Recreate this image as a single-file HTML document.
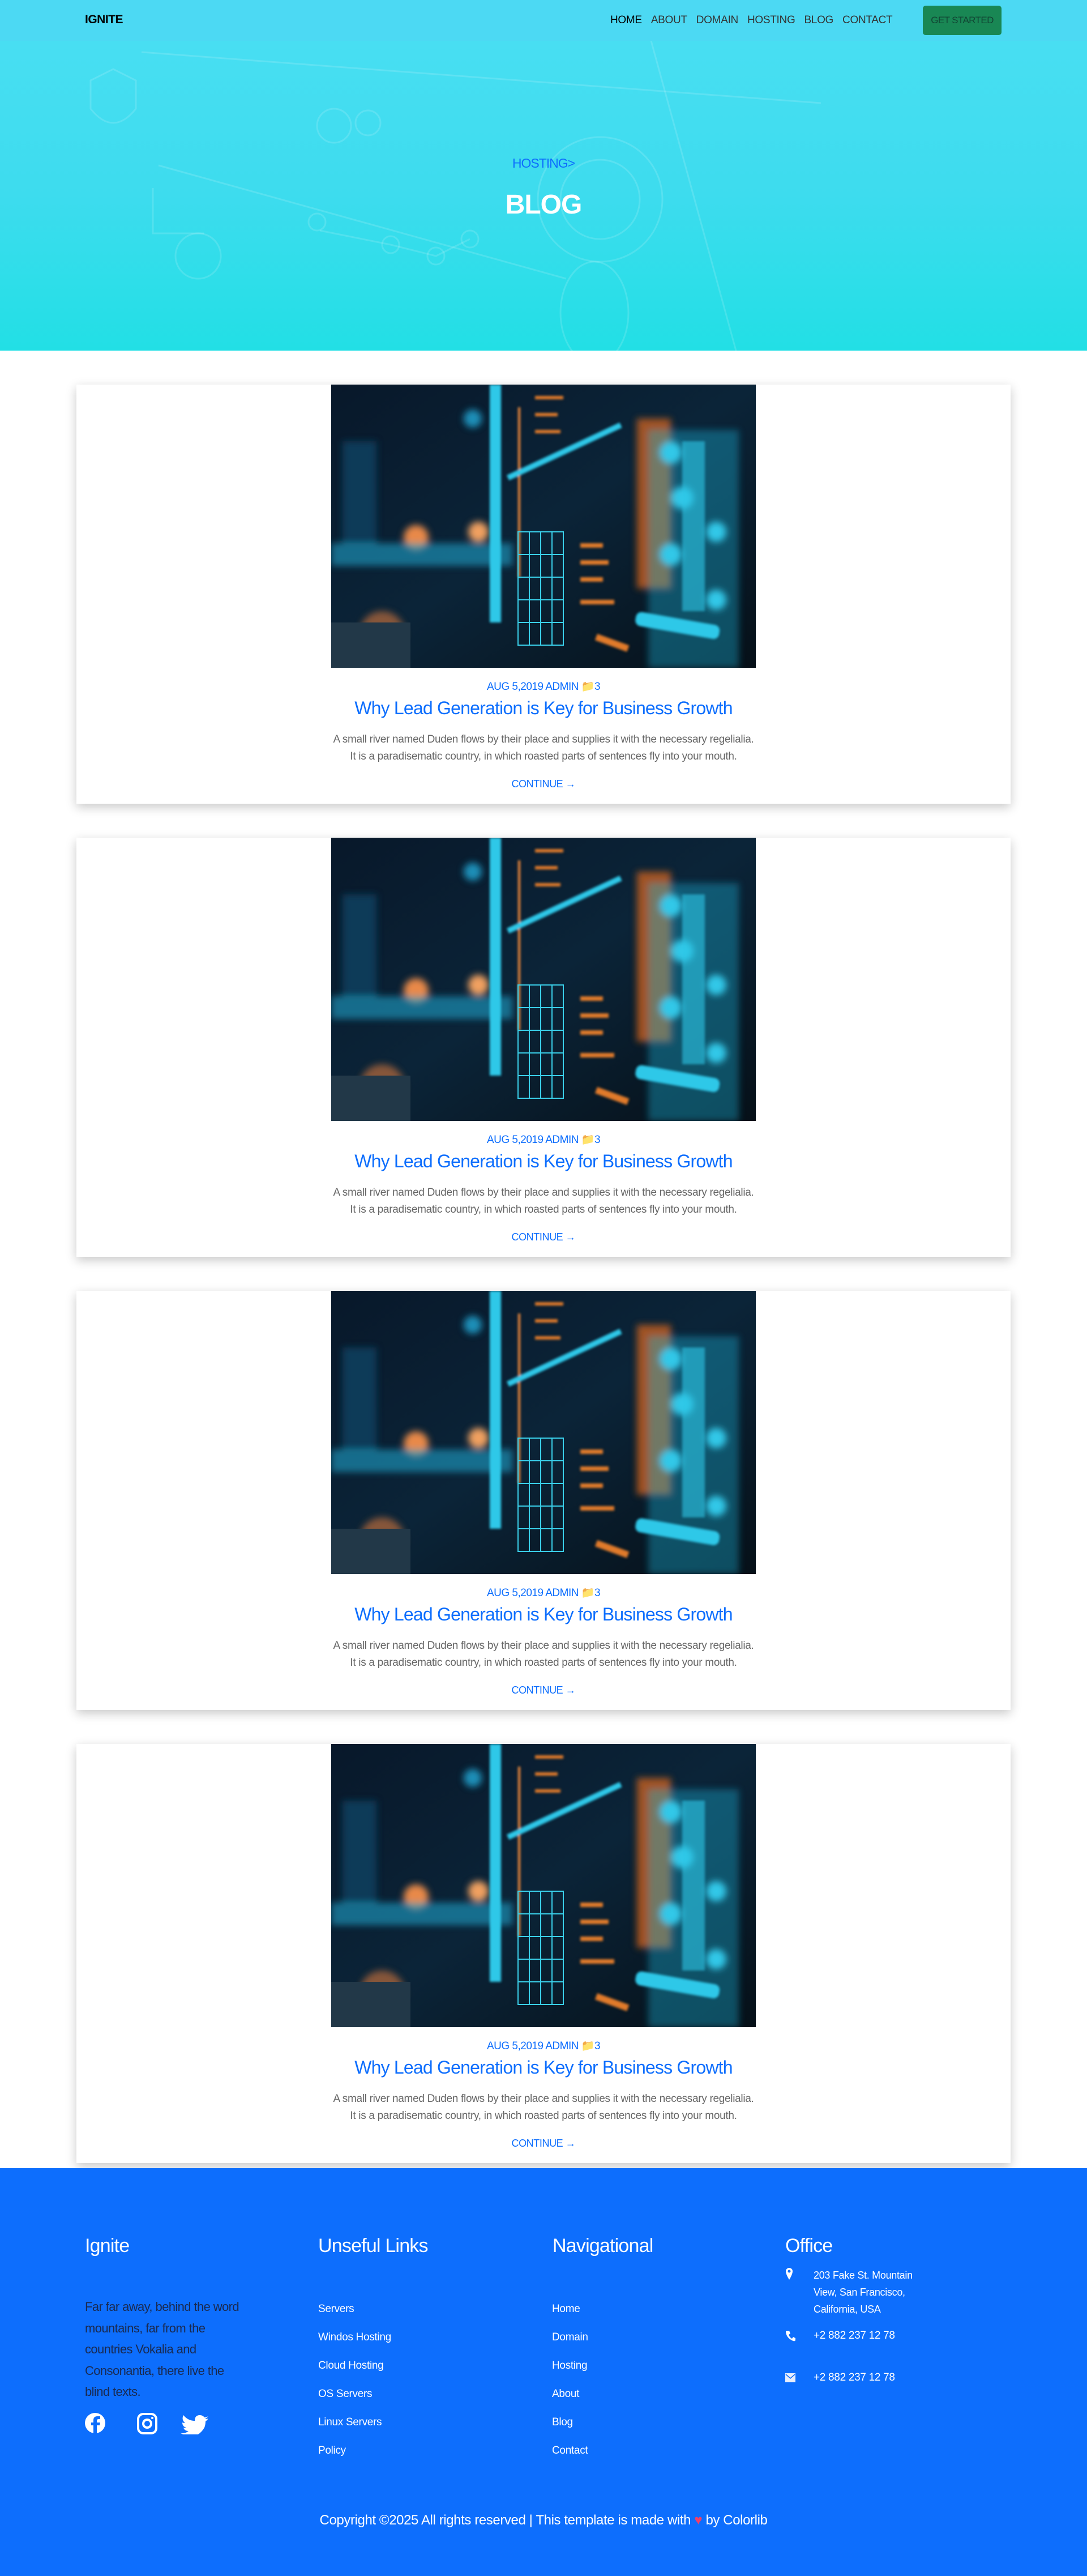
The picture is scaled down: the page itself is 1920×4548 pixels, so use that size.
<!DOCTYPE html>
<html><head><meta charset="utf-8">
<style>
*{margin:0;padding:0;box-sizing:border-box}
body{width:1920px;height:4548px;background:#fff;font-family:"Liberation Sans",sans-serif;position:relative;overflow:hidden}
.nav{position:absolute;left:0;top:0;width:1920px;height:72px;background:#4cd9f3;z-index:2}
.logo{position:absolute;left:150px;top:23px;font-size:21px;font-weight:bold;color:#000;letter-spacing:-0.5px}
.links{position:absolute;left:1078px;top:25px;font-size:19px;color:#333;letter-spacing:-0.3px;white-space:nowrap}
.links span{margin-right:16px}
.btn{position:absolute;left:1630px;top:10px;width:139px;height:52px;background:#198754;border-radius:5px;color:#143;font-size:17px;line-height:52px;text-align:center;letter-spacing:-0.6px}
.hero{position:absolute;left:0;top:72px;width:1920px;height:547px;background:linear-gradient(180deg,#48def2 0%,#3ddcee 50%,#22dfe5 100%);overflow:hidden}
.hero svg{position:absolute;left:0;top:0}
.crumb{position:absolute;top:203px;width:100%;text-align:center;font-size:23px;color:#0d6efd;font-weight:300;letter-spacing:-1px}
.h1{position:absolute;top:262px;width:100%;text-align:center;font-size:48px;font-weight:bold;color:#fff;letter-spacing:-1px}
.card{position:absolute;left:135px;width:1650px;height:740px;background:#fff;box-shadow:0 6px 18px rgba(0,0,0,.22)}
.img{position:absolute;left:450px;top:0;width:750px;height:500px;overflow:hidden;background:#07121f}
.meta{position:absolute;top:521px;width:100%;text-align:center;font-size:19px;color:#0d6efd;letter-spacing:-0.5px}
.title{position:absolute;top:553px;width:100%;text-align:center;font-size:32px;color:#0d6efd;letter-spacing:-0.8px}
.desc{position:absolute;top:612px;width:100%;text-align:center;font-size:19px;color:#666;line-height:30px;letter-spacing:-0.3px}
.cont{position:absolute;top:695px;width:100%;text-align:center;font-size:18px;color:#0d6efd;letter-spacing:-0.4px}
.foot{position:absolute;left:0;top:3828px;width:1920px;height:720px;background:#0d6efd;color:#fff}
.fh{position:absolute;top:118px;font-size:34px;letter-spacing:-0.8px}
.fl{position:absolute;font-size:19px;letter-spacing:-0.3px}
.fp{position:absolute;left:150px;top:226px;width:310px;font-size:22px;line-height:37.5px;color:#1a2a50;font-weight:300;letter-spacing:-0.6px}
.copy{position:absolute;top:608px;width:100%;text-align:center;font-size:24px;letter-spacing:-0.4px}
</style></head><body>
<div class="nav">
<div class="logo">IGNITE</div>
<div class="links"><span style="color:#000">HOME</span><span>ABOUT</span><span>DOMAIN</span><span>HOSTING</span><span>BLOG</span><span>CONTACT</span></div>
<div class="btn">GET STARTED</div>
</div>
<div class="hero">
<svg width="1920" height="547" fill="none" stroke="rgba(255,255,255,0.14)" stroke-width="3">
<line x1="250" y1="20" x2="1450" y2="110"/>
<line x1="1150" y1="0" x2="1300" y2="547"/>
<line x1="280" y1="220" x2="1000" y2="420"/>
<path d="M160 70 l40 -20 l40 20 v50 q-40 50 -80 0z"/>
<circle cx="590" cy="150" r="30"/><circle cx="650" cy="145" r="22"/>
<circle cx="560" cy="320" r="15"/><circle cx="690" cy="360" r="15"/><circle cx="770" cy="380" r="15"/><circle cx="830" cy="350" r="15"/>
<path d="M565 335 L690 360 L770 380 L830 350"/>
<circle cx="1060" cy="280" r="110"/><circle cx="1060" cy="280" r="70"/>
<circle cx="350" cy="380" r="40"/>
<path d="M270 260 v80 h90"/>
<ellipse cx="1050" cy="480" rx="60" ry="90"/>
</svg>
<div class="crumb">HOSTING&gt;</div>
<div class="h1">BLOG</div>
</div>

<svg width="0" height="0" style="position:absolute"><defs><filter id="b" x="-20%" y="-20%" width="140%" height="140%"><feGaussianBlur stdDeviation="6"/></filter><filter id="b2"><feGaussianBlur stdDeviation="2"/></filter><linearGradient id="g" x1="0" y1="0" x2="1" y2="1"><stop offset="0" stop-color="#08182a"/><stop offset=".5" stop-color="#0b2438"/><stop offset="1" stop-color="#061018"/></linearGradient>
<g id="art"><rect width="750" height="500" fill="url(#g)"/>
<g filter="url(#b)"><circle cx="50" cy="240" r="20" fill="#f39a4a"/><circle cx="150" cy="270" r="22" fill="#e8894a"/><circle cx="260" cy="260" r="18" fill="#f0a060"/><rect x="0" y="280" width="320" height="40" fill="#1aa0c8" opacity=".6"/><circle cx="90" cy="440" r="40" fill="#d8783a" opacity=".6"/><rect x="540" y="60" width="60" height="300" fill="#e06a1a" opacity=".7"/><rect x="560" y="80" width="160" height="420" fill="#1ec0e8" opacity=".35"/><rect x="20" y="100" width="60" height="180" fill="#0d3a58"/><circle cx="600" cy="120" r="20" fill="#30c8e8"/><circle cx="620" cy="200" r="20" fill="#30c8e8"/><circle cx="600" cy="300" r="20" fill="#30c8e8"/><circle cx="680" cy="260" r="18" fill="#30c8e8"/><circle cx="680" cy="380" r="18" fill="#30c8e8"/><circle cx="250" cy="60" r="16" fill="#1f8fb8"/></g>
<g filter="url(#b2)" fill="#2fc8e8"><rect x="280" y="0" width="20" height="420"/><rect x="330" y="40" width="4" height="300" fill="#f08a3a"/><rect x="310" y="160" width="220" height="10" transform="rotate(-25 310 160)"/><rect x="540" y="400" width="150" height="25" rx="10" transform="rotate(10 540 400)"/><rect x="620" y="100" width="40" height="300" opacity=".6"/></g>
<g stroke="#3ad0ea" stroke-width="2" fill="none"><path d="M330 260 h80 v200 h-80z M330 300 h80 M330 340 h80 M330 380 h80 M330 420 h80 M350 260 v200 M370 260 v200 M390 260 v200"/></g>
<g fill="#e07a2a" filter="url(#b2)"><rect x="440" y="280" width="40" height="8"/><rect x="440" y="310" width="50" height="8"/><rect x="440" y="340" width="40" height="8"/><rect x="440" y="380" width="60" height="8"/><rect x="470" y="440" width="60" height="12" transform="rotate(20 470 440)"/><rect x="360" y="20" width="50" height="6"/><rect x="360" y="50" width="40" height="6"/><rect x="360" y="80" width="45" height="6"/></g>
<rect x="0" y="420" width="140" height="80" fill="#223848"/></g></defs></svg>

<div class="card" style="top:679px"><div class="img"><svg width="750" height="500"><use href="#art"/></svg></div>
<div class="meta">AUG 5,2019 ADMIN <span style="color:#f5b942">&#128193;</span>3</div>
<div class="title">Why Lead Generation is Key for Business Growth</div>
<div class="desc">A small river named Duden flows by their place and supplies it with the necessary regelialia.<br>It is a paradisematic country, in which roasted parts of sentences fly into your mouth.</div>
<div class="cont">CONTINUE &#8594;</div></div>

<div class="card" style="top:1479px"><div class="img"><svg width="750" height="500"><use href="#art"/></svg></div>
<div class="meta">AUG 5,2019 ADMIN <span style="color:#f5b942">&#128193;</span>3</div>
<div class="title">Why Lead Generation is Key for Business Growth</div>
<div class="desc">A small river named Duden flows by their place and supplies it with the necessary regelialia.<br>It is a paradisematic country, in which roasted parts of sentences fly into your mouth.</div>
<div class="cont">CONTINUE &#8594;</div></div>

<div class="card" style="top:2279px"><div class="img"><svg width="750" height="500"><use href="#art"/></svg></div>
<div class="meta">AUG 5,2019 ADMIN <span style="color:#f5b942">&#128193;</span>3</div>
<div class="title">Why Lead Generation is Key for Business Growth</div>
<div class="desc">A small river named Duden flows by their place and supplies it with the necessary regelialia.<br>It is a paradisematic country, in which roasted parts of sentences fly into your mouth.</div>
<div class="cont">CONTINUE &#8594;</div></div>

<div class="card" style="top:3079px"><div class="img"><svg width="750" height="500"><use href="#art"/></svg></div>
<div class="meta">AUG 5,2019 ADMIN <span style="color:#f5b942">&#128193;</span>3</div>
<div class="title">Why Lead Generation is Key for Business Growth</div>
<div class="desc">A small river named Duden flows by their place and supplies it with the necessary regelialia.<br>It is a paradisematic country, in which roasted parts of sentences fly into your mouth.</div>
<div class="cont">CONTINUE &#8594;</div></div>

<div class="foot">
<div class="fh" style="left:150px">Ignite</div>
<div class="fh" style="left:562px">Unseful Links</div>
<div class="fh" style="left:976px">Navigational</div>
<div class="fh" style="left:1387px">Office</div>
<div class="fp">Far far away, behind the word<br>mountains, far from the<br>countries Vokalia and<br>Consonantia, there live the<br>blind texts.</div>
<svg style="position:absolute;left:150px;top:430px" width="220" height="40" fill="#fff">
<circle cx="18" cy="20" r="18"/><path d="M21 38 v-14 h5 l1-5 h-6 v-3 q0-3 3-3 h3 v-5 h-5 q-7 0-7 7 v4 h-4 v5 h4 v14z" fill="#0d6efd"/>
<rect x="94" y="4" width="32" height="34" rx="9" fill="none" stroke="#fff" stroke-width="4"/><circle cx="110" cy="21" r="7" fill="none" stroke="#fff" stroke-width="4"/><circle cx="119" cy="11" r="2"/>
<path d="M218 8 q-4 2-7 2 q-3-4-8-4 q-9 0-9 10 q-12 0-20-10 q-4 8 3 14 q-3 0-5-1 q0 7 7 9 q-3 1-5 0 q2 6 9 6 q-6 5-14 4 q28 14 42-10 q2-5 2-11 q3-2 5-5 q-3 1-6 1 q3-2 6-5z"/>
</svg>
<div class="fl" style="left:562px;top:238px">Servers</div>
<div class="fl" style="left:562px;top:288px">Windos Hosting</div>
<div class="fl" style="left:562px;top:338px">Cloud Hosting</div>
<div class="fl" style="left:562px;top:388px">OS Servers</div>
<div class="fl" style="left:562px;top:438px">Linux Servers</div>
<div class="fl" style="left:562px;top:488px">Policy</div>
<div class="fl" style="left:975px;top:238px">Home</div>
<div class="fl" style="left:975px;top:288px">Domain</div>
<div class="fl" style="left:975px;top:338px">Hosting</div>
<div class="fl" style="left:975px;top:388px">About</div>
<div class="fl" style="left:975px;top:438px">Blog</div>
<div class="fl" style="left:975px;top:488px">Contact</div>
<svg style="position:absolute;left:1387px;top:176px" width="14" height="22" fill="#fff"><path d="M7 0 a6 6 0 0 1 6 6 q0 5-6 15 q-6-10-6-15 a6 6 0 0 1 6-6z"/><circle cx="7" cy="6" r="2.5" fill="#0d6efd"/></svg>
<div class="fl" style="left:1437px;top:174px;line-height:30px;font-size:18px">203 Fake St. Mountain<br>View, San Francisco,<br>California, USA</div>
<svg style="position:absolute;left:1387px;top:286px" width="18" height="20" fill="#fff"><path d="M3 1 l4 0 l2 5 l-3 2 q2 5 6 7 l2-3 l4 2 v4 q-1 2-4 1 q-12-5-13-16 q0-2 2-2z"/></svg>
<div class="fl" style="left:1437px;top:285px">+2 882 237 12 78</div>
<svg style="position:absolute;left:1387px;top:362px" width="18" height="16"><rect width="18" height="16" fill="#e8eefc"/><path d="M1 2 l8 7 l8-7" stroke="#0d6efd" stroke-width="1.5" fill="none"/></svg>
<div class="fl" style="left:1437px;top:359px">+2 882 237 12 78</div>
<div class="copy">Copyright ©2025 All rights reserved | This template is made with <span style="color:#f0406a">&#9829;</span> by Colorlib</div>
</div>
</body></html>
